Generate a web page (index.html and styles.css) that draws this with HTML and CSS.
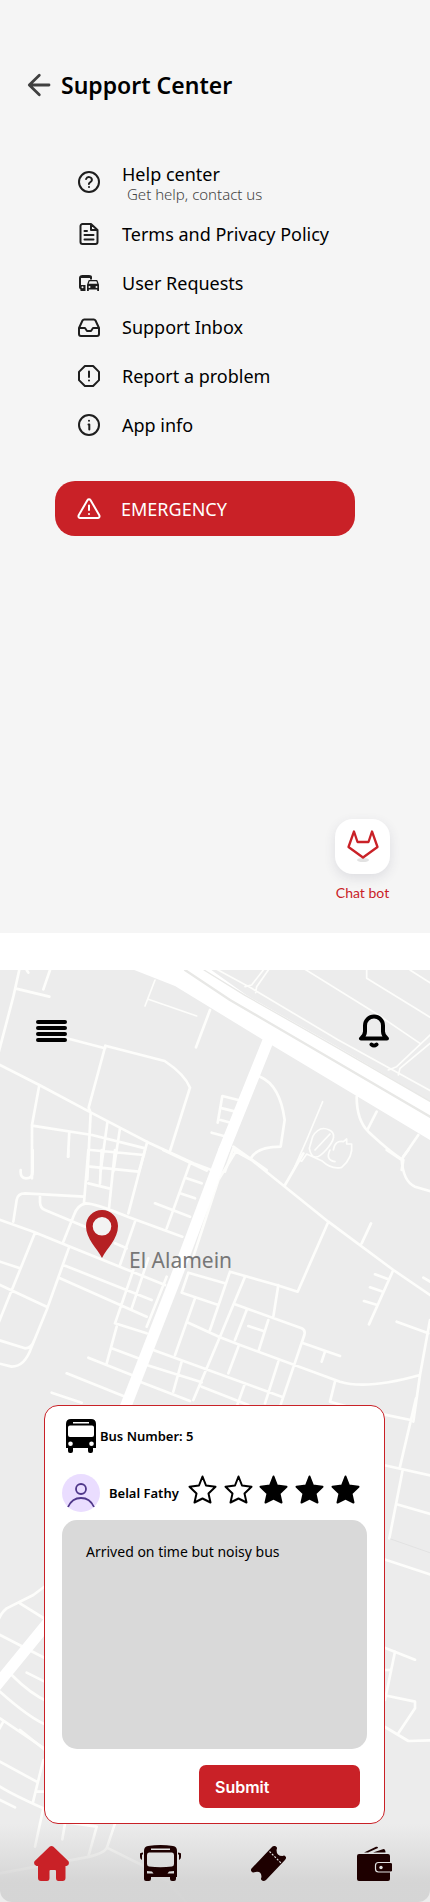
FILE: index.html
```html
<!DOCTYPE html>
<html lang="en">
<head>
<meta charset="utf-8">
<meta name="viewport" content="width=device-width, initial-scale=1">
<title>Support Center</title>
<link rel="stylesheet" href="styles.css">
</head>
<body>
<main class="screens">
<section class="support">
  <header class="support-header">
    <button class="icon-button" type="button" aria-label="Back">
      <svg width="24" height="24" viewBox="0 0 24 24" fill="none" stroke="#404040" stroke-width="2.8" stroke-linecap="round" stroke-linejoin="round"><path d="M22 12H2.500M12.300 2.300 2.300 12l10 9.700"/></svg>
    </button>
    <h1 class="title">Support Center</h1>
  </header>

  <ul class="menu">
    <li><a class="item" href="#help">
      <svg class="item-icon" viewBox="0 0 24 24"><circle cx="12" cy="12" r="10"/><path d="M9.100 9a3 3 0 0 1 5.800 1c0 2-3 2.500-3 4M12 17h.01"/></svg>
      <span class="item-text">Help center<small class="item-note">Get help, contact us</small></span>
    </a></li>
    <li><a class="item" href="#terms">
      <svg class="item-icon" viewBox="0 0 24 24"><path d="M14 2H5.500a2 2 0 0 0-2 2v16a2 2 0 0 0 2 2h13a2 2 0 0 0 2-2V8zM14 2v6h6.500M16.500 13h-9M16.500 17.500h-9M10 9H7.500"/></svg>
      <span class="item-text">Terms and Privacy Policy</span>
    </a></li>
    <li class="spaced"><a class="item" href="#requests">
      <svg class="item-icon icon-solid" viewBox="0 0 24 24"><path fill-rule="evenodd" d="M12 4H5.400C3.500 4 2 5.200 2 7v9c0 1 .4 1.800 1.500 2.500V20h5v-6H4V7h9v1.500h2V6c0-1.300-1-2-3-2zM5.500 17.200a1 1 0 1 1 0-2 1 1 0 0 1 0 2z"/><path fill-rule="evenodd" d="M20.600 9.700A1 1 0 0 0 19.700 9h-7.400a1 1 0 0 0-.9.700L10 13.800V20h1.800v-1.500h8.400V20H22v-6.200zM12.600 10.200h6.800l.9 2.600h-8.600zM12.500 17a1 1 0 1 1 0-2 1 1 0 0 1 0 2zm7 0a1 1 0 1 1 0-2 1 1 0 0 1 0 2z"/></svg>
      <span class="item-text">User Requests</span>
    </a></li>
    <li><a class="item" href="#inbox">
      <svg class="item-icon" viewBox="0 0 24 24"><path d="M22 13h-6l-2 3h-4l-2-3H2M5.500 5.500 2 13v6a2 2 0 0 0 2 2h16a2 2 0 0 0 2-2v-6l-3.500-7.500A2 2 0 0 0 16.800 4.500H7.200a2 2 0 0 0-1.700 1z"/></svg>
      <span class="item-text">Support Inbox</span>
    </a></li>
    <li class="spaced"><a class="item" href="#report">
      <svg class="item-icon" viewBox="0 0 24 24"><path d="M7.900 2h8.200L22 7.900v8.200L16.100 22H7.900L2 16.100V7.900zM12 7.500V13M12 16.500h.01"/></svg>
      <span class="item-text">Report a problem</span>
    </a></li>
    <li class="spaced"><a class="item" href="#info">
      <svg class="item-icon" viewBox="0 0 24 24"><circle cx="12" cy="12" r="10"/><path d="M11.500 11.500h.8v5M12 7.700h.01"/></svg>
      <span class="item-text">App info</span>
    </a></li>
  </ul>

  <button class="emergency" type="button">
    <svg width="24" height="24" viewBox="0 0 24 24" fill="none" stroke="#fff" stroke-width="2" stroke-linecap="round" stroke-linejoin="round"><path d="M10.400 3.200 1.700 18.300a1.900 1.900 0 0 0 1.600 2.800h17.400a1.900 1.900 0 0 0 1.600-2.800L13.600 3.200a1.900 1.900 0 0 0-3.200 0zM12 8.500V13M12 17h.01"/></svg>
    <span>EMERGENCY</span>
  </button>

  <button class="chat" type="button">
    <span class="chat-tile">
      <svg width="34" height="36" viewBox="0 0 34 36" fill="none"><ellipse cx="17" cy="31" rx="6" ry="2" fill="#e2e2e2"/><path d="M2.500 18 8 2.500l3.500 10.500h11L26 2.500 31.500 18 17 28.500z" fill="#fff" stroke="#c92127" stroke-width="2.300" stroke-linejoin="round"/></svg>
    </span>
    <span>Chat bot</span>
  </button>
</section>

<section class="ride">
  <svg class="map" viewBox="0 0 1290 2796" preserveAspectRatio="xMidYMin slice" aria-hidden="true">
    <g class="road" transform="translate(0 -150)">
      <path d="M60 140 40 230-10 420M48 206l100 24M150 150l-20 58M80 150l5 8"/>
      <path class="thin" d="M465 180 435 258M445 238l145 50"/>
      <path d="M630 270 588 382M200 355l115 30 1-8 178 46q60 40 76 80l-60 190M316 378l-50 185 6 15-10 200M-10 430 118 495 272 577 440 665 580 730 660 760M118 495 96 615v160M96 617l180 28 160 40M208 635l-4 75M322 608l-20 145M360 625l-20 130M442 665l-25 90M272 690l160 15"/>
      <path d="M780 470q60 25 74 130l-12 80q-70 0-90 35M715 540l-48-12-14 80M667 565l40 10M662 600l30 8M635 638l45 12M700 680l100 70M700 685l-25 70"/>
      <path class="thin" d="M968 545 920 660 880 750M938 650q20-35 50-20t-10 60-50-5zM945 690l45-48M1000 690q5-30 30-25l10-8 0 15 15 0q5 40-30 70-30 8-60-20l-45-20-15 22-10-5M990 690q-15 30 15 35"/>
      <path d="M1070 530q0 70 35 105 70 65 105 85l-5 30M1130 575l-28 55M1255 645l-45 65"/>
      <path class="thin" d="M790 150l-35 45-20 5M805 150l-35 50-3 18M915 148 1120 275 1260 370M1100 150v25l155 95 40 25M1230 150l70 45M1290 345 1190 440 1165 450M1290 370l-90 75-5 20M645 145l110 60 260 155 290 160"/>
      <path class="artery" d="M805 360 672 690"/>
      <path class="highway" d="M390 145 525 198 790 360 1300 666V550L1015 382 740 226 620 140z"/>
      <path class="median" d="M555 150 690 240 900 362 1290 590"/>
      <path class="median-thin" d="M612 150 735 226 1010 382 1290 544"/>
    </g>
    <g class="road" transform="translate(0 540)">
      <path d="M98 0v65q0 20-20 20-18 0-16-25M205 0v20M265 0l-13 158M305 0l-5 100M345 0l-18 175M435 0l-50 190M270 50l145 15M265 100l62 15M252 140 75 130q-22 0-25 20l-10 65M120 140v15q0 20 15 25l120 50M190 275l32-80q10-30 35-35 30 0 130 42l160 58M-5 208 100 245 205 288 495 405M105 248-5 520M208 290l-68 190-45 110q-20 60-60 60L-5 640M0 335l60 20M0 405l140 65M-5 570l80 25q20 0 28-25M190 345l265 105M180 385l260 115M405 215l-45 130M345 280l35 15M445 325l-50 150M400 360l-55 160M345 520l95 30M350 530l-30 110M335 595l80 30M265 623l130 52M200 670l170 68M155 728l90 30M490 0l130 62M570 40l-70 195M560 85l45 15M540 130l45 15M465 160l105 40M500 380l-60 150"/>
      <path d="M700 0 755 30 985 215 1180 360 1290 435M855 105 910 10M985 215l-92 210L830 405 690 365M1085 280l28-60M1180 360 1107 523M1125 373l40 15M1110 412l35 12M1092 453l40 12M1160 0l45 30 5-10 15-20M1205 30q5 65 40 80l50 15M1290 395l-20-12M1285 550l-95-35M1290 510l-30 165-20 140M1260 675q-160 45-240 20L720 585 660 562 565 518M710 0 655 90 580 320M690 365l-60 175M565 368l110 32M565 368l-20 60M550 430l105 35M585 445l-60 170M735 380l-75 180-80 190M705 463l200 72q12 5 8 20l-73 215M835 405l-15 95M740 480l-35 90M745 528l45 15M805 510l-30 95M910 580l110 38M975 605l-10 30M460 600l385 140M440 645l165 52M545 635l-25 90M420 695l150 58M715 590l-30 80M605 710l140 55M735 700l-25 70M835 635l-40 125M1005 695l-15 60 70 20"/>
      <path class="artery" d="M672 0 525 390 365 800"/>
    </g>
    <g class="road" transform="translate(990 1290)">
      <path d="M160 43l82 17M258-5 210 200M160 195l145 32M218 210 178 415M200 313l105 30M160 477l145 48"/>
      <path class="ridge" d="M182 417l120 42"/>
    </g>
    <g class="road" transform="translate(0 1770)">
      <path d="M180 45l-80 60-80 40q-20 15-30 50M60 130l80 50M0 225l140 72M35 345q60 60 110 80M80 338l60 30M0 395q90 80 140 100M0 475l140 95M10 485-10 520M1150 262l95 37M1185 275l-30 145M1150 330h20M1150 405l95 20v20l-50 75M1150 498l75 45 70-2"/>
      <path class="artery" d="M150 180-30 400"/>
    </g>
    <g class="road" transform="translate(0 2310)">
      <path d="M60-30l75 60M0 65l110 60M130 60 98 190M0 140q40 25 130 65l-25 115M0 180l45 22M110 155h30M195 250l-8 48M150 240l140 20-25 90M345 250l-25 75q-10 15-50 25L0 400M325 325l100 50 80 50 60 70"/>
    </g>
  </svg>

  <header class="ride-header">
    <button class="icon-button" type="button" aria-label="Menu">
      <svg width="31" height="22" viewBox="0 0 31 22" stroke="#000" stroke-width="4" stroke-linecap="round"><path d="M2 2h27M2 8h27M2 14h27M2 20h27"/></svg>
    </button>
    <button class="icon-button" type="button" aria-label="Notifications">
      <svg width="32" height="34" viewBox="0 0 32 34" fill="none" stroke="#000" stroke-width="4" stroke-linecap="round" stroke-linejoin="round"><path d="M3 24.500h26q-4-3-4-7v-6a9 9 0 0 0-18 0v6q0 4-4 7z"/><path d="M13.500 30.500q2.500 2 5 0"/></svg>
    </button>
  </header>

  <div class="place">
    <svg width="32" height="48" viewBox="0 0 32 48"><circle cx="16" cy="16" r="10" fill="#f3f3f3"/><path fill="#b52023" fill-rule="evenodd" d="M16 0C7 0 0 7 0 16c0 13 11 22 16 32 5-10 16-19 16-32C32 7 25 0 16 0zm0 7a9.300 9.300 0 1 1 0 18.600A9.300 9.300 0 0 1 16 7z"/></svg>
    <span class="place-name">El Alamein</span>
  </div>

  <form class="card">
    <div class="bus-row">
      <svg width="30" height="34" viewBox="0 0 30 34"><path fill-rule="evenodd" d="M5 0h20q5 0 5 5v24h-3v3q0 2-2 2h-1q-2 0-2-2v-3H7v3q0 2-2 2H4q-2 0-2-2v-3H0V5q0-5 5-5zM7 3v1.500h16V3zM4 6.500q-2 0-2 2V16q0 2 2 2h22q2 0 2-2V8.500q0-2-2-2zM4.500 22.500a2.300 2.300 0 1 0 .01 4.600 2.300 2.300 0 0 0 0-4.600zm21 0a2.300 2.300 0 1 0 .01 4.600 2.300 2.300 0 0 0 0-4.600z"/></svg>
      <strong class="label">Bus Number: 5</strong>
    </div>
    <div class="rider-row">
      <svg width="38" height="38" viewBox="0 0 38 38" fill="none" stroke="#4f378a" stroke-width="1.800"><circle cx="19" cy="19" r="19" fill="#eaddff" stroke="none"/><circle cx="19" cy="15" r="5"/><path d="M6 33q4-9 13-9t13 9"/></svg>
      <strong class="label rider-name">Belal Fathy</strong>
      <div class="stars">
        <button class="star" type="button" aria-label="1 star"><svg viewBox="0 0 29 29"><path d="M14.500 1.500 18 10.500l9.500 1.300-7 6.700 2 9-8-4-8 4 2-9-7-6.700L11 10.500z"/></svg></button>
        <button class="star" type="button" aria-label="2 stars"><svg viewBox="0 0 29 29"><path d="M14.500 1.500 18 10.500l9.500 1.300-7 6.700 2 9-8-4-8 4 2-9-7-6.700L11 10.500z"/></svg></button>
        <button class="star star-full" type="button" aria-label="3 stars"><svg viewBox="0 0 29 29"><path d="M14.500 1.500 18 10.500l9.500 1.300-7 6.700 2 9-8-4-8 4 2-9-7-6.700L11 10.500z"/></svg></button>
        <button class="star star-full" type="button" aria-label="4 stars"><svg viewBox="0 0 29 29"><path d="M14.500 1.500 18 10.500l9.500 1.300-7 6.700 2 9-8-4-8 4 2-9-7-6.700L11 10.500z"/></svg></button>
        <button class="star star-full" type="button" aria-label="5 stars"><svg viewBox="0 0 29 29"><path d="M14.500 1.500 18 10.500l9.500 1.300-7 6.700 2 9-8-4-8 4 2-9-7-6.700L11 10.500z"/></svg></button>
      </div>
    </div>
    <textarea class="comment" aria-label="Comment">Arrived on time but noisy bus</textarea>
    <button class="submit" type="button">Submit</button>
  </form>

  <nav class="tabs">
    <a href="#home" aria-label="Home"><svg width="35" height="35" viewBox="0 0 35 35" fill="#c92127"><path d="M15.500.8q2-1.600 4 0l15 14.500q1.500 3.500-2 4.700h-1v12q0 3-3 3h-4q-2.500 0-2.500-3v-7q0-1-1-1h-4.500q-1 0-1 1v7q0 3-2.500 3H7q-3 0-3-3V20H2.500Q-1 18.500.5 15.300z"/></svg></a>
    <a href="#buses" aria-label="Buses"><svg width="41" height="36" viewBox="0 0 41 36" fill="#1e0000"><path fill-rule="evenodd" d="M8 1q12.500-2 25 0 4 .5 4 5v26h-1v2q0 2-2 2h-2q-2 0-2-2v-2H11v2q0 2-2 2H6q-2 0-2-2V6q0-4.500 4-5zm3 2.500v1.600h19V3.500zM9 7.500Q7 7.500 7 10v9q0 2 2 2.500 11.500 1.500 23 0 2-.5 2-2.500v-9q0-2.500-2-2.500zM7 26v2.500h6.500L12 26.500zm27 0-5 .5-1.500 2H34z"/><path d="M0 9q0-1.500 3-1.500v1.800l-1 .4V15q-2-1-2-3zM41 9q0-1.500-3-1.500v1.800l1 .4V15q2-1 2-3z"/></svg></a>
    <a href="#tickets" aria-label="Tickets"><svg width="35" height="35" viewBox="0 0 35 35"><path fill="#1e0000" d="M20 2q3-3.500 5.500-1 1 1 0 3 0 6 6 6 2-1 3 .5 1.500 1.500-1 4L15 34q-2.500 2-4.500 0-1-1 0-3 0-6-6-5-3 1-4-.5-1.500-2 1-4z"/><path d="m18.500 5.500 11.500 11.500" stroke="#ddd" stroke-width="1.200" stroke-dasharray="2 1.500"/></svg></a>
    <a href="#wallet" aria-label="Wallet"><svg width="35" height="35" viewBox="0 0 35 35"><path fill="#1e0000" d="M2 8h29q2 0 2 2v23q0 2-2 2H2q-2 0-2-2V10q0-2 2-2zM7 6.500 19 .8q2-.5 2 1.200L11 6.500zM16 6.500 26.500 3q2 0 2 3.500z"/><rect x="18.500" y="16.500" width="18" height="9.500" rx="3" fill="#1e0000" stroke="#e0e0e0" stroke-width="1.200"/><circle cx="24" cy="21.500" r="1.700" fill="#e0e0e0"/></svg></a>
  </nav>
</section>
</main>
</body>
</html>
```
FILE: styles.css
```css
* { box-sizing: border-box; }

body {
  margin: 0;
  background: #fff;
  color: #000;
  font-family: "Noto Sans", "Open Sans", sans-serif;
}

button {
  border: 0;
  margin: 0;
  padding: 0;
  background: none;
  color: inherit;
  font: inherit;
  cursor: pointer;
}

svg { display: block; flex: none; }

.screens {
  display: flex;
  flex-direction: column;
  gap: 37px;
}

.support {
  display: flex;
  flex-direction: column;
  padding: 65px 40px 31px 55px;
  background: #f5f5f5;
}

.support-header {
  display: flex;
  align-items: center;
  gap: 10px;
  margin-left: -28px;
}

.title {
  margin: 0;
  font-size: 23px;
  line-height: 40px;
  font-weight: 600;
}

.menu {
  display: flex;
  flex-direction: column;
  gap: 20px;
  list-style: none;
  margin: 57px 0 0;
  padding: 0 0 0 22px;
}

.spaced { margin-top: 5px; }

.item {
  display: flex;
  align-items: center;
  gap: 21px;
  color: inherit;
  text-decoration: none;
  font-size: 18px;
  line-height: 24px;
}

.item-icon {
  width: 24px;
  height: 24px;
  fill: none;
  stroke: #1e1e1e;
  stroke-width: 2;
  stroke-linecap: round;
  stroke-linejoin: round;
}

.icon-solid { fill: #1e1e1e; stroke: none; }

.item-note {
  display: block;
  padding-left: 5px;
  color: #444;
  font-size: 15px;
  line-height: 16px;
  font-weight: 300;
}

.emergency {
  display: flex;
  align-items: center;
  gap: 20px;
  width: 100%;
  max-width: 300px;
  height: 55px;
  margin-top: 44px;
  padding: 0 22px;
  border-radius: 20px;
  background: #c92127;
  color: #fff;
  font-size: 18px;
}

.chat {
  display: flex;
  flex-direction: column;
  align-items: center;
  align-self: flex-end;
  gap: 10px;
  margin-top: 283px;
  color: #c92127;
  font-family: Lato, sans-serif;
  font-size: 14px;
  line-height: 18px;
}

.chat-tile {
  display: grid;
  place-items: center;
  width: 55px;
  height: 55px;
  border-radius: 18px;
  background: #fff;
  box-shadow: 0 4px 12px rgba(60, 60, 90, .12);
}

.ride {
  position: relative;
  display: flex;
  flex-direction: column;
  background: #ececec;
  overflow: hidden;
}

.map {
  position: absolute;
  inset: 0;
  width: 100%;
  height: 100%;
}

.road { fill: none; stroke: #fdfdfb; stroke-width: 8; stroke-linecap: round; stroke-linejoin: round; }
.thin { stroke-width: 5; }
.artery { stroke: #fff; stroke-width: 34; }
.highway { fill: #fff; stroke: none; }
.median { stroke: #e8e8e6; stroke-width: 7; }
.median-thin { stroke: #e8e8e6; stroke-width: 4; }
.ridge { stroke: #dcdcdc; stroke-width: 2; }

.ride-header {
  position: relative;
  display: flex;
  justify-content: space-between;
  align-items: center;
  padding: 44px 40px 0 36px;
}

.place {
  position: absolute;
  top: 240px;
  left: 20%;
  display: flex;
  align-items: flex-end;
  gap: 11px;
}

.place-name {
  margin-bottom: -14px;
  color: #777;
  font-size: 21px;
  line-height: 24px;
}

.card {
  position: relative;
  display: flex;
  flex-direction: column;
  margin: 357px 45px 0 44px;
  padding: 13px 17px 15px;
  border: 1px solid #c92127;
  border-radius: 14px;
  background: #fff;
}

.bus-row {
  display: flex;
  align-items: center;
  gap: 4px;
  padding-left: 4px;
}

.label {
  font-size: 13px;
  line-height: 20px;
  font-weight: 600;
}

.rider-row {
  display: flex;
  align-items: center;
  gap: 9px;
  margin-top: 21px;
}

.rider-name { white-space: nowrap; }

.stars {
  display: flex;
  flex: 1;
  justify-content: space-between;
  margin: 0 7px 8px 0;
}

.star svg {
  width: 29px;
  height: 29px;
  fill: none;
  stroke: #000;
  stroke-width: 2;
  stroke-linejoin: round;
}

.star-full svg { fill: #000; }

.comment {
  width: 100%;
  height: 229px;
  margin-top: 8px;
  padding: 22px 24px;
  border: 0;
  border-radius: 15px;
  background: #d9d9d9;
  color: #000;
  font: 14px/20px "Noto Sans", sans-serif;
  resize: none;
}

.submit {
  align-self: flex-end;
  width: 161px;
  height: 43px;
  margin: 16px 7px 0 0;
  padding-left: 16px;
  border-radius: 7px;
  background: #c92127;
  color: #fff;
  font: 600 16px/20px Inter, sans-serif;
  text-align: left;
}

.tabs {
  position: relative;
  display: flex;
  justify-content: space-between;
  align-items: center;
  padding: 21px 38px 21px 34px;
  border-radius: 0 0 12px 12px;
  background: linear-gradient(rgba(212, 212, 212, 0), rgba(212, 212, 212, .95) 75%);
}
```
